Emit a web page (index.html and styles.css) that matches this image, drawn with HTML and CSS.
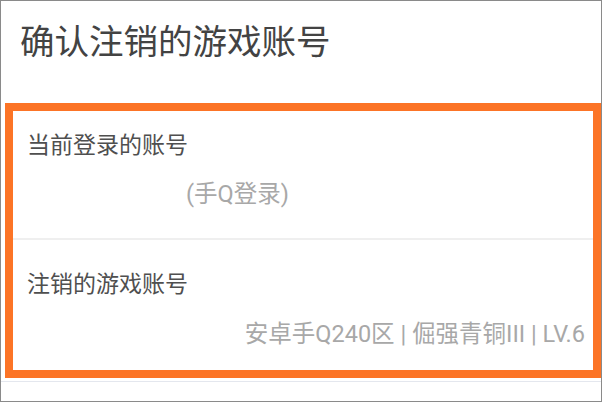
FILE: index.html
```html
<!doctype html>
<html>
<head>
  <meta charset="utf-8">
  <meta name="viewport" content="width=device-width, initial-scale=1">
  <title>确认注销的游戏账号</title>
  <link rel="stylesheet" href="styles.css">
</head>
<body>

  <div class="frame">
    <h1 class="title">确认注销的游戏账号</h1>

    <div class="highlight">
      <div class="row row-first">
        <div class="label">当前登录的账号</div>
        <div class="value value-login">(手Q登录)</div>
      </div>
      <div class="row row-second">
        <div class="label">注销的游戏账号</div>
        <div class="value value-game">安卓手Q240区 | 倔强青铜III | LV.6</div>
      </div>
    </div>

    <div class="footer"></div>
  </div>

</body>
</html>
```

FILE: styles.css
```css
body {
  margin: 0;
  background: #fff;
  font-family: Roboto, "Noto Sans CJK SC", sans-serif;
}

.frame {
  box-sizing: border-box;
  width: 602px;
  height: 402px;
  border: 1px solid #8a8a8a;
  overflow: hidden;
}

.title {
  margin: 0;
  padding: 21px 0 0 19px;
  height: 80px;
  box-sizing: border-box;
  font-size: 34.5px;
  line-height: 40px;
  font-weight: normal;
  color: #434343;
}

.highlight {
  margin: 22px 0 0 4px;
  height: 275px;
  box-sizing: border-box;
  border: 8px solid #fc7426;
  display: flex;
  flex-direction: column;
}

.row {
  display: flex;
  flex-direction: column;
  padding: 0 8px 0 14px;
}

.row-first {
  height: 129px;
  box-sizing: border-box;
  padding-top: 20px;
  gap: 18px;
  border-bottom: 2px solid #efefef;
}

.row-second {
  padding-top: 30px;
  gap: 19px;
}

.label {
  font-size: 23px;
  line-height: 30px;
  color: #4f4f4f;
}

.value {
  font-size: 23.5px;
  line-height: 30px;
  color: #a8a8a8;
}

.value-login {
  padding-left: 159px;
}

.value-game {
  text-align: right;
}

.footer {
  margin-top: 3px;
  border-top: 1px solid #e4e7ee;
}
```
